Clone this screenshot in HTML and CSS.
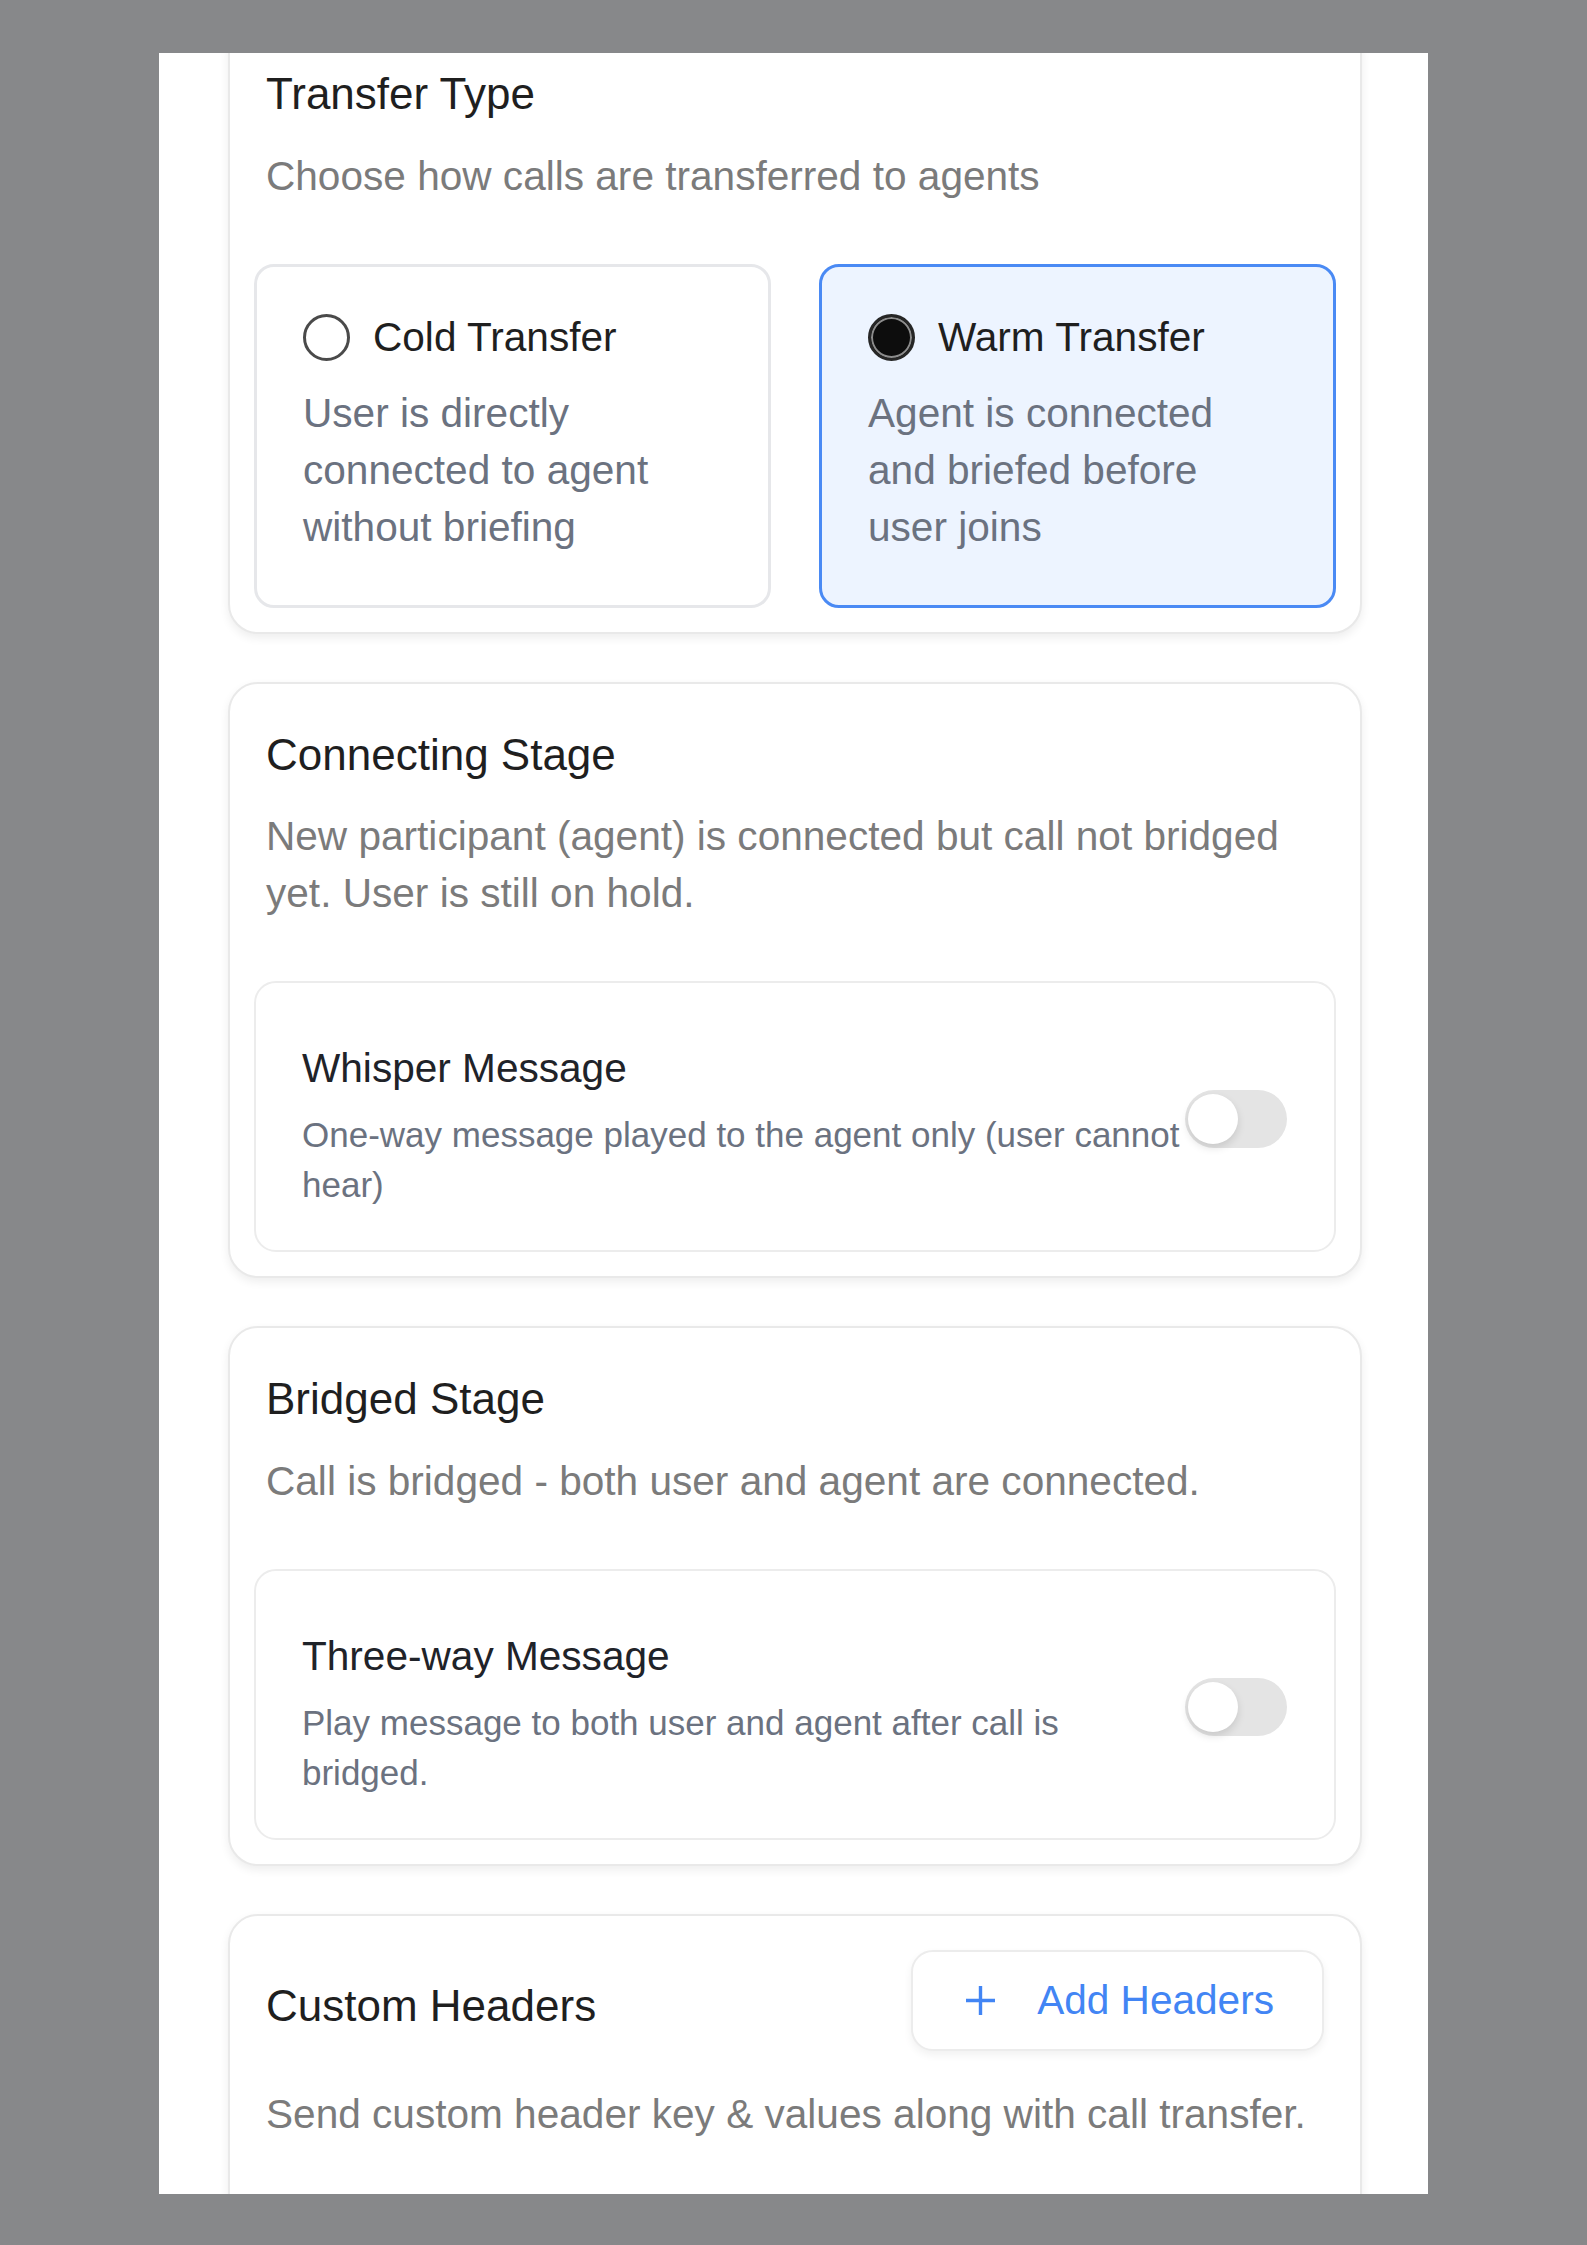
FILE: index.html
```html
<!DOCTYPE html>
<html>
	<head>
		<meta charset="utf-8" />
		<title>Transfer settings</title>
		<link rel="stylesheet" href="styles.css">
	</head>
	<body>
		<div class="panel">
			<div class="panel-scroll">
				<!-- transfer type -->
				<div class="card">
					<div class="card-head">
						<h3 class="card-title">Transfer Type</h3>
						<p class="card-desc">Choose how calls are transferred to agents</p>
					</div>
					<div class="options">
						<div class="option">
							<div class="option-head">
								<span class="radio"></span>
								<span>Cold Transfer</span>
							</div>
							<p class="option-desc">User is directly connected to agent without briefing</p>
						</div>
						<div class="option option-selected">
							<div class="option-head">
								<span class="radio radio-checked"></span>
								<span>Warm Transfer</span>
							</div>
							<p class="option-desc">Agent is connected and briefed before user joins</p>
						</div>
					</div>
				</div>

				<!-- connecting stage -->
				<div class="card">
					<div class="card-head">
						<h3 class="card-title">Connecting Stage</h3>
						<p class="card-desc">New participant (agent) is connected but call not bridged yet. User is still on hold.</p>
					</div>
					<div class="setting">
						<div class="setting-text">
							<div class="setting-label">Whisper Message</div>
							<div class="setting-sub">One-way message played to the agent only (user cannot hear)</div>
						</div>
						<span class="toggle"><span class="toggle-knob"></span></span>
					</div>
				</div>

				<!-- bridged stage -->
				<div class="card">
					<div class="card-head">
						<h3 class="card-title">Bridged Stage</h3>
						<p class="card-desc">Call is bridged - both user and agent are connected.</p>
					</div>
					<div class="setting">
						<div class="setting-text">
							<div class="setting-label">Three-way Message</div>
							<div class="setting-sub">Play message to both user and agent after call is bridged.</div>
						</div>
						<span class="toggle"><span class="toggle-knob"></span></span>
					</div>
				</div>

				<!-- custom headers -->
				<div class="card">
					<div class="card-head card-head-tight">
						<div class="card-head-row">
							<h3 class="card-title card-title-low">Custom Headers</h3>
							<a class="btn-add" href="#">
								<svg width="33" height="33" viewBox="0 0 33 33"><path d="M16.5 2v29M2 16.5h29" stroke="currentColor" stroke-width="3.4" fill="none"/></svg>
								<span>Add Headers</span>
							</a>
						</div>
						<p class="card-desc card-desc-far">Send custom header key &amp; values along with call transfer.</p>
					</div>
				</div>
			</div>
		</div>
	</body>
</html>
```

FILE: styles.css
```css
body{margin: 0;padding: 0;background: #87888a;font-family: "Liberation Sans", Arial, sans-serif;}
.panel{
	width: 1269px;height: 2141px;
	margin: 53px 0 0 159px;
	background: #fff;overflow: hidden;
}
.panel-scroll{
	display: flex;flex-direction: column;gap: 48px;
	padding: 0 66px 0 69px;margin-top: -32px;
}
.card{
	border: 2px solid #e9e9e9;border-radius: 30px;
	padding: 24px;background: #fff;
	box-shadow: 0 4px 10px rgba(0,0,0,0.07);
}
.card-head{padding: 16px 12px 59px;}
.card-head-tight{padding-top: 10px;}
.card-head-row{display: flex;justify-content: space-between;align-items: center;}
.card-title{margin: 0;font-size: 44px;line-height: 1.4;font-weight: 400;color: #1f1f1f;}
.card-title-low{padding-top: 12px;}
.card-desc{margin: 23px 0 0;font-size: 40.6px;line-height: 57px;color: #7b7b7b;}
.card-desc-far{margin-top: 35px;}

.options{display: grid;grid-template-columns: 1fr 1fr;gap: 48px;}
.option{
	border: 3px solid #e6e7ea;border-radius: 20px;
	padding: 47px 46px 49px;
}
.option-selected{border-color: #4a8af4;background: #edf4ff;}
.option-head{display: flex;align-items: center;gap: 23px;font-size: 40.6px;color: #1f1f1f;}
.radio{
	width: 47px;height: 47px;flex: none;box-sizing: border-box;
	border: 3px solid #4a4a4a;border-radius: 50%;background: #fff;
}
.radio-checked{border-color: #262626;background: #0d0d0d;box-shadow: inset 0 0 0 2px #8c8c8c;}
.option-desc{margin: 24px 0 0;max-width: 400px;font-size: 40.6px;line-height: 57px;color: #6b7280;}

.setting{
	display: flex;align-items: center;
	border: 2px solid #ececec;border-radius: 22px;
	padding: 57px 47px 40px 46px;
}
.setting-text{flex: 1;}
.setting-label{font-size: 40.6px;line-height: 57px;color: #1f2329;}
.setting-sub{margin-top: 13px;font-size: 35px;line-height: 50px;color: #6b7280;}
.toggle{
	width: 102px;height: 58px;flex: none;box-sizing: border-box;
	display: flex;align-items: center;padding: 0 3px;margin-bottom: 12px;
	border-radius: 29px;background: #e4e4e4;
}
.toggle-knob{
	width: 50px;height: 50px;border-radius: 50%;background: #fff;
	box-shadow: 0 4px 9px rgba(0,0,0,0.12);
}

.btn-add{
	display: flex;align-items: center;gap: 40px;
	height: 101px;box-sizing: border-box;padding: 0 48px 0 51px;
	border: 2px solid #ececec;border-radius: 22px;background: #fff;
	box-shadow: 0 4px 8px rgba(0,0,0,0.06);
	color: #4285f4;font-size: 40.6px;text-decoration: none;
}
.btn-add svg{flex: none;}
```
